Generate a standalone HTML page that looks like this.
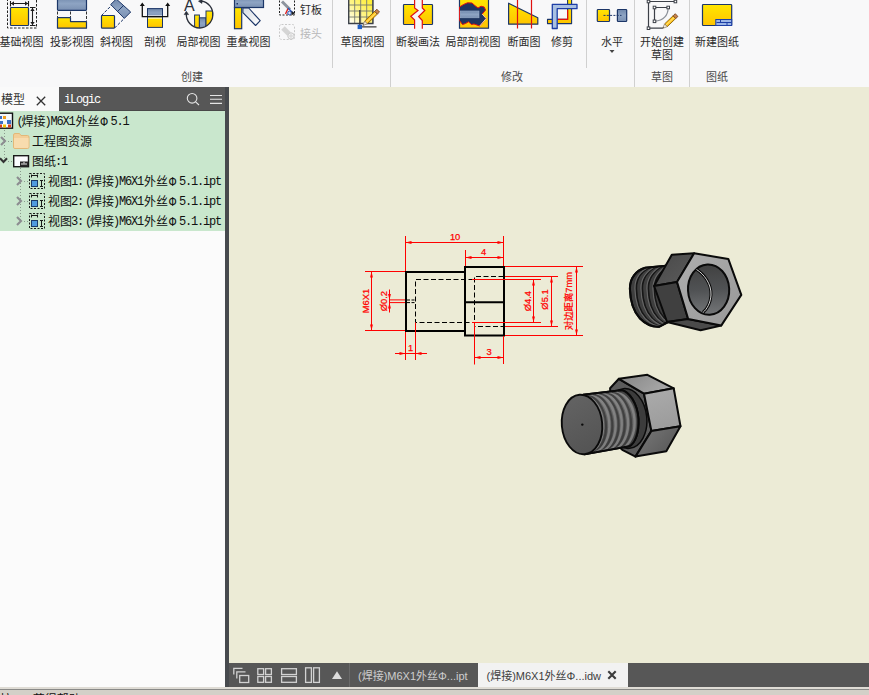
<!DOCTYPE html>
<html lang="zh-CN">
<head>
<meta charset="utf-8">
<title>Autodesk Inventor</title>
<style>
html,body{margin:0;padding:0;}
body{width:869px;height:695px;overflow:hidden;position:relative;background:#f4f4f4;font-family:"Liberation Sans","Noto Sans CJK SC",sans-serif;}
.abs{position:absolute;}
#ribbon{position:absolute;left:0;top:0;width:869px;height:87px;background:#f8f8f9;overflow:hidden;}
.rl{position:absolute;font-size:11px;line-height:13px;color:#2b2b2b;white-space:nowrap;text-align:center;transform:translateX(-50%);}
.pl{position:absolute;font-size:11px;line-height:13px;color:#4a4a4a;white-space:nowrap;text-align:center;transform:translateX(-50%);top:71px;}
.sep{position:absolute;width:1px;background:#d0d0d0;top:0;}
#canvas{position:absolute;left:229px;top:87px;width:640px;height:576px;background:#ecebd6;overflow:hidden;}
#lefttabs{position:absolute;z-index:2;left:0;top:87px;width:229px;height:24px;background:#575757;box-shadow:inset 0 -1px 0 #484848;}
#tabmodel{position:absolute;left:0;top:0;width:59px;height:24px;background:#fafafa;}
#tree{position:absolute;left:0;top:110px;width:225px;height:121px;background:#c9e7cd;overflow:hidden;}
#treewhite{position:absolute;left:0;top:231px;width:225px;height:456px;background:#fbfbfb;}
#vstrip{position:absolute;left:225px;top:87px;width:4px;height:600px;background:#474a4e;}
.tr{position:absolute;left:0;height:20px;line-height:20px;font-size:12px;color:#111;white-space:nowrap;font-family:"Liberation Mono","Noto Sans CJK SC",monospace;}
.tr .l{letter-spacing:-1.2px;position:relative;top:-1px;left:-1px;}
.tr .lp{left:1px;}
.tr .ph{display:inline-block;width:12px;text-align:center;position:relative;left:-1.5px;}
#bottabs{position:absolute;left:229px;top:663px;width:640px;height:24px;background:#575757;}
#status{position:absolute;left:0;top:687px;width:869px;height:8px;background:#d4d0c8;border-top:2px solid #dfdcd5;box-sizing:border-box;overflow:hidden;}
#status:before{content:"";position:absolute;left:0;top:0;width:869px;height:1px;background:#8a8a88;}
</style>
</head>
<body>
<div id="ribbon">
  <!-- RIBBON-ICONS -->
<svg class="abs" style="left:0;top:0;" width="869" height="60" viewBox="0 0 869 60">
<defs>
  <linearGradient id="gy" x1="0" y1="0" x2="0" y2="1"><stop offset="0" stop-color="#ffe600"/><stop offset="1" stop-color="#ffc400"/></linearGradient>
  <linearGradient id="gb" x1="0" y1="0" x2="0" y2="1"><stop offset="0" stop-color="#6f87ab"/><stop offset="0.5" stop-color="#8ea4c3"/><stop offset="1" stop-color="#7a90b2"/></linearGradient>
  <linearGradient id="gyw" x1="1" y1="0" x2="0" y2="1"><stop offset="0" stop-color="#ffee20"/><stop offset="0.55" stop-color="#fff58a"/><stop offset="1" stop-color="#ffffff"/></linearGradient>
  <linearGradient id="gw" x1="0" y1="0" x2="1" y2="1"><stop offset="0" stop-color="#d4dae2"/><stop offset="1" stop-color="#ffffff"/></linearGradient>
  <linearGradient id="gpen" x1="0" y1="0" x2="1" y2="1"><stop offset="0" stop-color="#ffd84a"/><stop offset="0.5" stop-color="#ffb300"/><stop offset="1" stop-color="#d98a00"/></linearGradient>
</defs>
<g>
<rect x="7.500" y="-3" width="29" height="31" fill="none" stroke="#222" stroke-width="1" stroke-dasharray="2.500 1.500"/>
<rect x="10.500" y="7.500" width="18" height="18" rx="0.800" fill="url(#gy)" stroke="#1c3668" stroke-width="1.200"/>
<path d="M10.500 3.500 H28.500 M10.500 1 V6.500 M28.500 1 V6.500 M32.500 7.500 V25.500 M30 7.500 H35.500 M30 25.500 H35.500" fill="none" stroke="#1e1e1e" stroke-width="1.100"/>
<path d="M11 3.500 L14 1.300 V5.700 Z M28 3.500 L25 1.300 V5.700 Z M32.500 8 L30.300 11 H34.700 Z M32.500 25 L30.300 22 H34.700 Z" fill="#1e1e1e"/>
</g>
<g>
<rect x="57.500" y="-3" width="29" height="13.300" rx="0.800" fill="url(#gb)" stroke="#1c3668" stroke-width="1.200"/>
<path d="M57.500 11.500 V17 M70.500 11.500 V17 M86.500 11.500 V21" fill="none" stroke="#333" stroke-width="1" stroke-dasharray="3 1.500"/>
<path d="M57.500 17.700 H70.500 V21.600 H86.500 V28.200 H57.500 Z" fill="url(#gy)" stroke="#1c3668" stroke-width="1.200" stroke-linejoin="round"/>
</g>
<g>
<path d="M101.500 15.500 L111.700 5.200 M114.600 28 L124.300 18.400" stroke="#1c3668" stroke-width="1" stroke-dasharray="3 1.500" fill="none"/>
<path d="M116.300 -1 L130.700 12 L124.300 18.400 L110.700 4.500 Z" fill="url(#gb)" stroke="#1c3668" stroke-width="1"/>
<path d="M123.500 5.500 L117.500 11.500" stroke="#1c3668" stroke-width="1"/>
<rect x="101.500" y="15.500" width="13" height="12.700" rx="0.800" fill="url(#gy)" stroke="#1c3668" stroke-width="1.200"/>
</g>
<g>
<rect x="147.500" y="8.600" width="15" height="8.500" fill="url(#gb)" stroke="#1c3668" stroke-width="1"/>
<rect x="147.500" y="17" width="15" height="10.400" fill="url(#gy)" stroke="#1c3668" stroke-width="1"/>
<rect x="148" y="15" width="14" height="4" fill="#fff" opacity="0.550"/>
<path d="M142.300 4 V16.600 H167.700 V4" fill="none" stroke="#111" stroke-width="1.300"/>
<path d="M142.300 2.600 L139.800 6 H144.800 Z M167.700 2.600 L165.200 6 H170.200 Z" fill="#111"/>
</g>
<g>
<clipPath id="cpd"><circle cx="199.800" cy="14.400" r="13.300"/></clipPath>
<g clip-path="url(#cpd)">
<rect x="194.600" y="15" width="4.800" height="14" fill="url(#gy)" stroke="#1c3668" stroke-width="1"/>
<rect x="199.400" y="17.800" width="6.600" height="11" fill="url(#gb)" stroke="#1c3668" stroke-width="1"/>
<rect x="206" y="11" width="6.500" height="16" fill="url(#gy)" stroke="#1c3668" stroke-width="1"/>
</g>
<path d="M201.500 1 A13.600 13.600 0 0 1 199.800 28 A13.600 13.600 0 0 1 186.400 13" fill="none" stroke="#2a2f3a" stroke-width="1.300"/>
<path d="M198.500 1.200 L202 -0.800 V3.400 Z M186.300 11.300 L184.200 14.600 H188.600 Z" fill="#2a2f3a" stroke="#2a2f3a" stroke-width="0.600"/>
<text x="189.400" y="10.600" font-family="Liberation Sans, sans-serif" font-size="16px" text-anchor="middle" fill="#2a2f3a">A</text>
</g>
<g>
<path d="M242.900 8 L248.700 8 L260.200 20.700 L255.600 25.500 L242.900 12.700 Z" fill="url(#gw)" stroke="#1c3668" stroke-width="1.100" stroke-linejoin="round"/>
<rect x="234.500" y="7.500" width="7.200" height="21.200" fill="url(#gy)" stroke="#1c3668" stroke-width="1.200"/>
<rect x="234.500" y="-3" width="29" height="10.500" fill="url(#gb)" stroke="#1c3668" stroke-width="1.200"/>
<rect x="236.500" y="3" width="1.500" height="1.500" fill="#1c3668"/>
</g>
<g>
<rect x="279.500" y="-2" width="15" height="17" fill="none" stroke="#222" stroke-width="1" stroke-dasharray="2 1.500"/>
<path d="M282 1.500 L290 9.500" stroke="#8d949e" stroke-width="3"/>
<path d="M288 8.500 L285.500 14" stroke="#e0201c" stroke-width="1.400"/>
<path d="M288 8 L293.500 13.500" stroke="#2a55b8" stroke-width="1.200"/>
<circle cx="289.500" cy="13" r="1.800" fill="#dbe6f6" stroke="#2a55b8" stroke-width="1"/>
<path d="M291.500 11 L295 13.300 L291.500 15.500 Z" fill="#222"/>
</g>
<g opacity="0.900">
<rect x="279.500" y="24.500" width="15" height="15" rx="2" fill="none" stroke="#c4c4c4" stroke-width="1" stroke-dasharray="2 1.500"/>
<path d="M283 28 L289 34" stroke="#d2d2d2" stroke-width="5" stroke-linecap="butt"/>
<circle cx="291" cy="36" r="3.200" fill="#f2f2f2" stroke="#c4c4c4" stroke-width="1"/>
<circle cx="291" cy="36" r="1.200" fill="none" stroke="#c4c4c4" stroke-width="0.800"/>
</g>
<g>
<rect x="348.700" y="-2" width="24.200" height="25.500" fill="url(#gyw)"/>
<path d="M348.700 0 V23.500 M354.700 0 V23.500 M360.700 0 V23.500 M366.700 0 V23.500 M372.900 0 V23.500 M348.700 5 H372.900 M348.700 11 H372.900 M348.700 17 H372.900 M348.700 23.500 H372.900" fill="none" stroke="#777a70" stroke-width="0.900"/>
<path d="M348.700 -2 V23.500 H372.900 V-2" fill="none" stroke="#3a3f48" stroke-width="1.300"/>
<path d="M359.800 10 V25 M362 26.800 H376.500" stroke="#3a3a3a" stroke-width="1.300"/>
<rect x="357.600" y="24.700" width="4.400" height="4.400" fill="#1f5fc4"/>
<path d="M367.3 23.8 L377.4 14.1 L374.7 11.3 L364.7 21.1 Z" fill="#ffc21a" stroke="#7a5200" stroke-width="0.800" stroke-linejoin="round"/><path d="M366.0 22.5 L376.1 12.7" stroke="#ffe98a" stroke-width="1"/><path d="M377.4 14.1 L379.5 12.0 L376.9 9.2 L374.7 11.3 Z" fill="#c9824a" stroke="#6e3f18" stroke-width="0.800" stroke-linejoin="round"/><path d="M367.3 23.8 L362.8 25.6 L364.7 21.1 Z" fill="#f6ecd9" stroke="#8a7a60" stroke-width="0.700" stroke-linejoin="round"/><path d="M364.4 25.0 L362.8 25.6 L363.5 24.0 Z" fill="#555"/>
</g>
<g>
<rect x="403.500" y="4.500" width="29" height="20" rx="0.800" fill="url(#gy)" stroke="#1c3668" stroke-width="1.200"/>
<path d="M414.600 -1 V8 L418 10.500 L410.800 16.200 L414.600 20 V29 H422.300 V20.500 L418.600 16.500 L424.800 10.500 L422.300 8 V-1 Z" fill="#f7f7f7"/>
<path d="M414.600 -1 V8 L418 10.500 L410.800 16.200 L414.600 20 V28.800 M422.300 -1 V8 L424.800 10.500 L418.600 16.500 L422.300 20.500 V28.800" fill="none" stroke="#e01010" stroke-width="1.200"/>
</g>
<g>
<rect x="459.500" y="-2" width="29" height="30.200" fill="url(#gy)" stroke="#1c3668" stroke-width="1.200"/>
<path d="M459.500 7 L463.500 4.500 L467.500 2.800 L472 3 L474.800 5.500 L478 8 L481 6.200 L484.200 7 L485.600 10 L482.200 14 L486.200 18.500 L479.800 26 L474 24 L471.500 24.500 L468.500 21.800 L465.500 23.500 L462.500 24.500 L459.500 20.500 Z" fill="#1f3560" stroke="#e01010" stroke-width="1"/>
<path d="M479.800 26 L486.200 18.500 L482.200 14" fill="none" stroke="#f5ecb0" stroke-width="0.900"/>
<rect x="460.200" y="11" width="18.800" height="6.800" fill="url(#gb)" stroke="#9fb2cd" stroke-width="0.600"/>
</g>
<g>
<path d="M508.600 3.200 L537.800 17.800 V24.200 H508.600 Z" fill="url(#gy)" stroke="#1c3668" stroke-width="1.200" stroke-linejoin="round"/>
<path d="M517.500 -1 V28.500 M531.500 -1 V28.500" stroke="#e01010" stroke-width="1.200"/>
</g>
<g>
<path d="M567.600 -2 H571.600 V23.600 H547.500 V19.400 H567.600 Z" fill="url(#gy)" stroke="#1c3668" stroke-width="1.100" stroke-linejoin="round"/>
<path d="M567.600 10 V19.400 H557.500" fill="none" stroke="#e01010" stroke-width="1.200"/>
<path d="M552.300 4.400 H577 V8.700 H557.200 V28.500 H552.300 Z" fill="#a9c0e2" stroke="#1d3ea6" stroke-width="1.300" stroke-linejoin="round"/>
</g>
<g>
<rect x="597.300" y="9.500" width="12.200" height="12" rx="0.800" fill="url(#gy)" stroke="#1c3668" stroke-width="1.200"/>
<rect x="617.400" y="9.500" width="9.300" height="12" rx="0.800" fill="url(#gb)" stroke="#1c3668" stroke-width="1.200"/>
<path d="M603.500 15.400 H621.500" stroke="#1c3668" stroke-width="1" stroke-dasharray="2 1.300"/>
<path d="M609.500 50 H614.500 L612 53 Z" fill="#444"/>
</g>
<g>
<path d="M675.400 1.500 H648.500 V28.200 H663" fill="none" stroke="#3c4048" stroke-width="1.200"/>
<path d="M668.200 7.500 H654.500 V21.300" fill="none" stroke="#3c4048" stroke-width="1.200"/>
<path d="M668.200 7.500 Q668 20 654.500 21.300" fill="none" stroke="#8b9098" stroke-width="1.200"/>
<g fill="#fff" stroke="#3c4048" stroke-width="1">
<rect x="647.200" y="0.200" width="2.600" height="2.600"/><rect x="674.100" y="0.200" width="2.600" height="2.600"/><rect x="647.200" y="26.900" width="2.600" height="2.600"/>
<rect x="653.200" y="6.200" width="2.600" height="2.600"/><rect x="666.900" y="6.200" width="2.600" height="2.600"/><rect x="653.200" y="20" width="2.600" height="2.600"/>
</g>
<path d="M667.2 26.7 L675.7 18.5 L673.1 15.8 L664.6 23.9 Z" fill="#ffc21a" stroke="#7a5200" stroke-width="0.800" stroke-linejoin="round"/><path d="M665.9 25.3 L674.4 17.2" stroke="#ffe98a" stroke-width="1"/><path d="M675.7 18.5 L677.9 16.5 L675.3 13.7 L673.1 15.8 Z" fill="#c9824a" stroke="#6e3f18" stroke-width="0.800" stroke-linejoin="round"/><path d="M667.2 26.7 L662.6 28.4 L664.6 23.9 Z" fill="#f6ecd9" stroke="#8a7a60" stroke-width="0.700" stroke-linejoin="round"/><path d="M664.2 27.8 L662.6 28.4 L663.3 26.8 Z" fill="#555"/>
</g>
<g>
<rect x="702.500" y="4.500" width="29.200" height="21" rx="0.800" fill="url(#gy)" stroke="#1c3668" stroke-width="1.200"/>
<rect x="715.800" y="19.500" width="15.900" height="6" fill="#9bb5e6" stroke="#1d3ea6" stroke-width="1"/>
<path d="M716.500 22.500 H731.500 M720.500 20 V22.500 M727 22.500 V25" stroke="#1d3ea6" stroke-width="1"/>
</g>
</svg>
  <!-- /RIBBON-ICONS -->
  <div class="rl" style="left:21.5px;top:36px;">基础视图</div>
  <div class="rl" style="left:72px;top:36px;">投影视图</div>
  <div class="rl" style="left:116.5px;top:36px;">斜视图</div>
  <div class="rl" style="left:155px;top:36px;">剖视</div>
  <div class="rl" style="left:198.5px;top:36px;">局部视图</div>
  <div class="rl" style="left:248.5px;top:36px;">重叠视图</div>
  <div class="rl" style="left:311px;top:4px;">钉板</div>
  <div class="rl" style="left:311px;top:28px;color:#b9b9b9;">接头</div>
  <div class="rl" style="left:362.5px;top:36px;">草图视图</div>
  <div class="rl" style="left:418px;top:36px;">断裂画法</div>
  <div class="rl" style="left:473px;top:36px;">局部剖视图</div>
  <div class="rl" style="left:524px;top:36px;">断面图</div>
  <div class="rl" style="left:562px;top:36px;">修剪</div>
  <div class="rl" style="left:612px;top:36px;">水平</div>
  <div class="rl" style="left:662px;top:36px;">开始创建<br>草图</div>
  <div class="rl" style="left:717px;top:36px;">新建图纸</div>
  <div class="pl" style="left:192px;">创建</div>
  <div class="pl" style="left:512px;">修改</div>
  <div class="pl" style="left:662px;">草图</div>
  <div class="pl" style="left:717px;">图纸</div>
  <div class="sep" style="left:332px;height:68px;"></div>
  <div class="sep" style="left:390px;height:87px;"></div>
  <div class="sep" style="left:586px;height:68px;"></div>
  <div class="sep" style="left:634px;height:87px;"></div>
  <div class="sep" style="left:689px;height:87px;"></div>
</div>

<div id="lefttabs">
  <div id="tabmodel"></div>
  <div class="abs" style="left:225px;top:0;width:4px;height:24px;background:#474a4e;"></div>
  <div class="abs" style="left:1px;top:5px;font-size:12px;line-height:16px;color:#333;">模型</div>
  <svg class="abs" style="left:34px;top:7px;" width="14" height="14" viewBox="0 0 14 14"><path d="M2.800 2.800 L11.200 11.200 M11.200 2.800 L2.800 11.200" stroke="#333" stroke-width="1.300" fill="none"/></svg>
  <div class="abs" style="left:64px;top:5px;font-size:12px;line-height:16px;color:#ffffff;font-family:'Liberation Mono',monospace;letter-spacing:-1.200px;">iLogic</div>
  <svg class="abs" style="left:184px;top:4px;" width="42" height="18" viewBox="0 0 42 18"><circle cx="8.1" cy="7.3" r="4.8" fill="none" stroke="#e4e4e4" stroke-width="1.1"/><path d="M11.6 10.8 L15 14" stroke="#e4e4e4" stroke-width="1.1"/><path d="M26 4.5 H38 M26 8.3 H38 M26 12.4 H38" stroke="#e4e4e4" stroke-width="1.1"/></svg>
</div>
<div id="tree">

  <svg class="abs" style="left:0;top:0;" width="60" height="121" viewBox="0 0 60 121">
    <!-- dotted connector lines -->
    <path d="M4.5 20 V48 M20.5 58 V112" stroke="#8a9a8c" stroke-width="1" stroke-dasharray="1 2" fill="none"/>
    <path d="M8 31.5 H13 M8 51.5 H13 M24 71.5 H29 M24 91.5 H29 M24 111.5 H29" stroke="#8a9a8c" stroke-width="1" stroke-dasharray="1 2" fill="none"/>
    <!-- root icon -->
    <g>
      <rect x="-3.500" y="3.200" width="16" height="15" fill="#f2f7fc" stroke="#111" stroke-width="1.400"/>
      <rect x="-1" y="6" width="3" height="3" fill="#3a6fc4"/><rect x="3" y="6" width="3" height="3" fill="#f0a020"/>
      <rect x="-1" y="11" width="4" height="3" fill="#3a6fc4"/><rect x="7" y="10" width="4" height="4" fill="#3a6fc4"/>
      <rect x="3" y="14.500" width="3" height="3" fill="#f2c200"/><rect x="8" y="14.500" width="3" height="3" fill="#d84020"/>
      <rect x="-1" y="14.500" width="3" height="3" fill="#d84020"/>
    </g>
    <!-- chevrons -->
    <path d="M1 27 L5 31 L1 35" stroke="#8c8c90" stroke-width="2.100" fill="none"/>
    <path d="M0 48.300 L3.500 52 L7 48.300" stroke="#333" stroke-width="2.100" fill="none"/>
    <path d="M17 67 L21 71 L17 75" stroke="#8c8c90" stroke-width="2.100" fill="none"/>
    <path d="M17 87 L21 91 L17 95" stroke="#8c8c90" stroke-width="2.100" fill="none"/>
    <path d="M17 107 L21 111 L17 115" stroke="#8c8c90" stroke-width="2.100" fill="none"/>
    <!-- folder -->
    <path d="M13.5 25 Q13.5 23.5 15 23.5 H19.5 L21 25.5 H27.5 Q29 25.5 29 27 V37 Q29 38.5 27.5 38.5 H15 Q13.5 38.5 13.5 37 Z" fill="#f3cf98" stroke="#e3b878" stroke-width="1"/>
    <path d="M14 28 H28.5 V37 Q28.500 38 27.5 38 H15 Q14 38 14 37 Z" fill="#f8dcae"/>
    <!-- sheet icon -->
    <rect x="13.700" y="45.700" width="14.800" height="11" fill="#fbfcfe" stroke="#1a1a1a" stroke-width="1.400"/>
    <rect x="20" y="51.500" width="8" height="5" fill="#2a2a2a"/>
    <path d="M21 54 H27 M24 52 V53.500" stroke="#e8e8e8" stroke-width="1"/>
    <!-- view icons -->
    <g>
      <rect x="29.500" y="63.500" width="15" height="15" fill="none" stroke="#1a1a1a" stroke-width="1" stroke-dasharray="2 1.500"/>
      <rect x="31.500" y="70.500" width="6" height="6" fill="#4f9be0" stroke="#1b3a6b" stroke-width="1"/>
      <path d="M31.500 65.500 H37.500 M31.500 64.500 V67.500 M37.500 64.500 V67.500 M40 70.500 H43 M40 76.500 H43 M41.500 70.500 V76.500" stroke="#1a1a1a" stroke-width="1" fill="none"/>
    </g>
    <g>
      <rect x="29.500" y="83.5" width="15" height="15" fill="none" stroke="#1a1a1a" stroke-width="1" stroke-dasharray="2 1.500"/>
      <rect x="31.500" y="90.5" width="6" height="6" fill="#4f9be0" stroke="#1b3a6b" stroke-width="1"/>
      <path d="M31.5 85.5 H37.5 M31.5 84.5 V87.5 M37.5 84.5 V87.5 M40 90.5 H43 M40 96.5 H43 M41.5 90.5 V96.5" stroke="#1a1a1a" stroke-width="1" fill="none"/>
    </g>
    <g>
      <rect x="29.500" y="103.5" width="15" height="15" fill="none" stroke="#1a1a1a" stroke-width="1" stroke-dasharray="2 1.500"/>
      <rect x="31.500" y="110.5" width="6" height="6" fill="#4f9be0" stroke="#1b3a6b" stroke-width="1"/>
      <path d="M31.5 105.5 H37.5 M31.5 104.5 V107.5 M37.5 104.5 V107.5 M40 110.5 H43 M40 116.5 H43 M41.5 110.5 V116.5" stroke="#1a1a1a" stroke-width="1" fill="none"/>
    </g>
  </svg>
  <div class="tr" style="left:15.500px;top:3px;"><span class="l lp">(</span>焊接<span class="l">)M6X1</span>外丝<span class="ph">Φ</span><span class="l">5.1</span></div>
  <div class="tr" style="left:32px;top:23px;">工程图资源</div>
  <div class="tr" style="left:32px;top:43px;">图纸<span class="l">:1</span></div>
  <div class="tr" style="left:48px;top:63px;">视图<span class="l">1:</span><span class="l lp">(</span>焊接<span class="l">)M6X1</span>外丝<span class="ph">Φ</span><span class="l">5.1.ipt</span></div>
  <div class="tr" style="left:48px;top:83px;">视图<span class="l">2:</span><span class="l lp">(</span>焊接<span class="l">)M6X1</span>外丝<span class="ph">Φ</span><span class="l">5.1.ipt</span></div>
  <div class="tr" style="left:48px;top:103px;">视图<span class="l">3:</span><span class="l lp">(</span>焊接<span class="l">)M6X1</span>外丝<span class="ph">Φ</span><span class="l">5.1.ipt</span></div>
</div>
<div id="treewhite"></div>
<div id="vstrip"></div>

<div id="canvas">
<svg class="abs" style="left:0;top:0;" width="640" height="575" viewBox="229 87 640 575">
  <!-- DRAWING2D -->
  <g fill="none" stroke="#000" stroke-width="2" stroke-linejoin="miter">
  <path d="M465 272 H406 V331 H465"/>
  <rect x="465" y="267" width="39" height="68.500"/>
  <path d="M465 302.300 H504"/>
  </g>
  <g fill="none" stroke="#000" stroke-width="1" stroke-dasharray="5 2.500">
  <path d="M503.500 279.500 H415.500 V322.500 H503.500"/>
  <path d="M503.500 276.500 H474.500 V326.500 H503.500"/>
  </g>
  <path d="M407 300 H415.500 M407 302.600 H415.500" stroke="#000" stroke-width="1" stroke-dasharray="3 1.500" fill="none"/>
  <g fill="none" stroke="#ff0000" stroke-width="1">
  <path d="M405.500 236 V271 M503.500 236 V266 M405.500 242.500 H503.500"/>
  <path d="M465.500 250 V266 M465.500 257.500 H503.500"/>
  <path d="M365 271.500 H405 M365 330.500 H405 M371.500 271.500 V330.500"/>
  <path d="M389.500 289.500 V312.500 M389.500 299.900 H405 M389.500 302.600 H405"/>
  <path d="M405.500 332 V360 M415.500 322.500 V360 M395 353.500 H427"/>
  <path d="M474.500 322 V364.500 M503.500 336 V364 M474.500 357.500 H503.500"/>
  <path d="M472 279.500 H541 M472 322.500 H541 M533.500 279.500 V322.500"/>
  <path d="M505 276.500 H558 M505 326.500 H558 M551.500 276.500 V326.500"/>
  <path d="M505 266.500 H583 M505 335.500 H583 M576.500 266.500 V335.500"/>
  </g>
  <path d="M405.5 242.5 L411.5 241.1 L411.5 243.9 Z" fill="#ff0000"/>
  <path d="M503.5 242.5 L497.5 241.1 L497.5 243.9 Z" fill="#ff0000"/>
  <path d="M465.5 257.5 L471.5 256.1 L471.5 258.9 Z" fill="#ff0000"/>
  <path d="M503.5 257.5 L497.5 256.1 L497.5 258.9 Z" fill="#ff0000"/>
  <path d="M371.5 271.5 L370.1 277.5 L372.9 277.5 Z" fill="#ff0000"/>
  <path d="M371.5 330.5 L370.1 324.5 L372.9 324.5 Z" fill="#ff0000"/>
  <path d="M389.5 299.9 L388.1 293.9 L390.9 293.9 Z" fill="#ff0000"/>
  <path d="M389.5 302.6 L388.1 308.6 L390.9 308.6 Z" fill="#ff0000"/>
  <path d="M405.5 353.5 L399.5 352.1 L399.5 354.9 Z" fill="#ff0000"/>
  <path d="M415.5 353.5 L421.5 352.1 L421.5 354.9 Z" fill="#ff0000"/>
  <path d="M474.5 357.5 L480.5 356.1 L480.5 358.9 Z" fill="#ff0000"/>
  <path d="M503.5 357.5 L497.5 356.1 L497.5 358.9 Z" fill="#ff0000"/>
  <path d="M533.5 279.5 L532.1 285.5 L534.9 285.5 Z" fill="#ff0000"/>
  <path d="M533.5 322.5 L532.1 316.5 L534.9 316.5 Z" fill="#ff0000"/>
  <path d="M551.5 276.5 L550.1 282.5 L552.9 282.5 Z" fill="#ff0000"/>
  <path d="M551.5 326.5 L550.1 320.5 L552.9 320.5 Z" fill="#ff0000"/>
  <path d="M576.5 266.5 L575.1 272.5 L577.9 272.5 Z" fill="#ff0000"/>
  <path d="M576.5 335.5 L575.1 329.5 L577.9 329.5 Z" fill="#ff0000"/>
  <g fill="#ff0000" stroke="#ff0000" stroke-width="0.25" font-size="9.400px" font-family="Liberation Sans, Noto Sans CJK SC, sans-serif" text-anchor="middle">
  <text x="455.100" y="240.400">10</text>
  <text x="483.700" y="254.500">4</text>
  <text x="410.600" y="350.800">1</text>
  <text x="489.200" y="355.200">3</text>
  <text transform="translate(369.100 301) rotate(-90)">M6X1</text>
  <text transform="translate(387.200 301.100) rotate(-90)">Ø0.2</text>
  <text transform="translate(530.700 301.200) rotate(-90)">Ø4.4</text>
  <text transform="translate(548 299.500) rotate(-90)">Ø5.1</text>
  <text transform="translate(571.800 301) rotate(-90)">对边距离7mm</text>
  </g>
  <!-- MODELS -->
  <defs>
  <linearGradient id="gFront1" x1="0" y1="0" x2="1" y2="1"><stop offset="0" stop-color="#aeaeae"/><stop offset="1" stop-color="#989898"/></linearGradient>
  <linearGradient id="gHole1" x1="0" y1="0" x2="0" y2="1"><stop offset="0" stop-color="#414141"/><stop offset="0.5" stop-color="#505254"/><stop offset="1" stop-color="#747678"/></linearGradient>
  <linearGradient id="gThr1" x1="0" y1="0" x2="0.25" y2="1"><stop offset="0" stop-color="#4c4c4c"/><stop offset="0.5" stop-color="#3a3a3a"/><stop offset="1" stop-color="#444"/></linearGradient>
  <linearGradient id="gTop1" x1="0" y1="0" x2="1" y2="1"><stop offset="0" stop-color="#484848"/><stop offset="1" stop-color="#5c5c5c"/></linearGradient>
  <linearGradient id="gDisc2" x1="0" y1="0" x2="0.3" y2="1"><stop offset="0" stop-color="#646464"/><stop offset="1" stop-color="#555555"/></linearGradient>
  <linearGradient id="gThr2" x1="0" y1="0" x2="0.12" y2="1"><stop offset="0" stop-color="#6e6e6e"/><stop offset="0.35" stop-color="#666"/><stop offset="1" stop-color="#4a4a4a"/></linearGradient>
  <linearGradient id="gTop2" x1="0" y1="0" x2="1" y2="0.4"><stop offset="0" stop-color="#858585"/><stop offset="1" stop-color="#a8a8a8"/></linearGradient>
  <linearGradient id="gRight2" x1="0" y1="0" x2="0.3" y2="1"><stop offset="0" stop-color="#acacac"/><stop offset="1" stop-color="#9c9c9c"/></linearGradient>
  <linearGradient id="gBot2" x1="0" y1="0" x2="1" y2="0.6"><stop offset="0" stop-color="#7c7c7c"/><stop offset="1" stop-color="#585858"/></linearGradient>
</defs>
  <g stroke="#0a0a0a" stroke-width="2" stroke-linejoin="round">
  <path d="M666 265.800 L645.300 267.700 C636 270.500 629.600 278 629.900 289 C630.200 300 633 311 640 318.500 C645 323.500 652 327.200 659.400 326.700 L668 322 Z" fill="#3e3e3e"/>
  </g>
  <clipPath id="cpThr1"><path d="M666 265.800 L645.300 267.700 C636 270.500 629.600 278 629.900 289 C630.200 300 633 311 640 318.500 C645 323.500 652 327.200 659.400 326.700 L668 322 Z"/></clipPath>
  <g fill="none" clip-path="url(#cpThr1)">
  <path d="M651.8 266.6 C642.5 270.5 636.1 278 636.4 289 C636.7 300 639.5 311 646.5 318.5 C651.5 323.5 658.5 327.2 665.9 326.7" stroke="#161616" stroke-width="1.600"/>
  <path d="M651.8 266.6 C642.5 270.5 636.1 278 636.4 289 C636.7 300 639.5 311 646.5 318.5 C651.5 323.5 658.5 327.2 665.9 326.7" stroke="#666" stroke-width="1.100" transform="translate(-1.500 0)"/>
  <path d="M657.8 265.9 C648.5 270.5 642.1 278 642.4 289 C642.7 300 645.5 311 652.5 318.5 C657.5 323.5 664.5 327.2 671.9 326.7" stroke="#161616" stroke-width="1.600"/>
  <path d="M657.8 265.9 C648.5 270.5 642.1 278 642.4 289 C642.7 300 645.5 311 652.5 318.5 C657.5 323.5 664.5 327.2 671.9 326.7" stroke="#666" stroke-width="1.100" transform="translate(-1.500 0)"/>
  <path d="M663.8 265.3 C654.5 270.5 648.1 278 648.4 289 C648.7 300 651.5 311 658.5 318.5 C663.5 323.5 670.5 327.2 677.9 326.7" stroke="#161616" stroke-width="1.600"/>
  <path d="M663.8 265.3 C654.5 270.5 648.1 278 648.4 289 C648.7 300 651.5 311 658.5 318.5 C663.5 323.5 670.5 327.2 677.9 326.7" stroke="#666" stroke-width="1.100" transform="translate(-1.500 0)"/>
  <path d="M669.8 264.8 C660.5 270.5 654.1 278 654.4 289 C654.7 300 657.5 311 664.5 318.5 C669.5 323.5 676.5 327.2 683.9 326.7" stroke="#161616" stroke-width="1.600"/>
  <path d="M669.8 264.8 C660.5 270.5 654.1 278 654.4 289 C654.7 300 657.5 311 664.5 318.5 C669.5 323.5 676.5 327.2 683.9 326.7" stroke="#666" stroke-width="1.100" transform="translate(-1.500 0)"/>
  </g>
  <path d="M666 265.800 L645.300 267.700 C636 270.500 629.600 278 629.900 289 C630.200 300 633 311 640 318.500 C645 323.500 652 327.200 659.400 326.700 L668 322 Z" fill="none" stroke="#0a0a0a" stroke-width="2" stroke-linejoin="round"/>
  <g stroke="#0a0a0a" stroke-width="2" stroke-linejoin="round">
  <path d="M671.800 254.700 L694.100 253.300 L677 281.900 L654.100 286 Z" fill="url(#gTop1)"/>
  <path d="M654.100 286 L677 281.900 L688.200 319.100 L667.100 322 Z" fill="#404040"/>
  <path d="M667.100 322 L688.200 319.100 L721.200 325.600 L700.600 330.300 Z" fill="#4a4a4a"/>
  <path d="M694.100 253.300 L728.300 258.900 L741.300 294.900 L721.200 325.600 L688.200 319.100 L677 281.900 Z" fill="url(#gFront1)"/>
  <ellipse cx="708.600" cy="289.600" rx="20.600" ry="25.200" transform="rotate(-3 708.600 289.600)" fill="url(#gHole1)"/>
  </g>
  <path d="M696.500 269.500 C704 274 711.500 284 711 295 C710.500 303 707 309 703 312.500" fill="none" stroke="#0a0a0a" stroke-width="3"/>
  <path d="M696.500 269.500 C704 274 711.500 284 711 295 C710.500 303 707 309 703 312.500" fill="none" stroke="#e8e8e8" stroke-width="0.900"/>
  <g stroke="#0a0a0a" stroke-width="2" stroke-linejoin="round">
  <path d="M618.900 378.800 L610.100 388.300 L612 440 L622.300 449.900 L635.500 456.600 L651.400 430.900 L644 393.700 Z" fill="#5c5c5c"/>
  <path d="M618.900 378.800 L647.400 374.800 L673.700 388.300 L644 393.700 Z" fill="url(#gTop2)"/>
  <path d="M644 393.700 L673.700 388.300 L680.500 426.200 L651.400 430.900 Z" fill="url(#gRight2)"/>
  <path d="M651.400 430.900 L680.500 426.200 L666.300 451.200 L635.500 456.600 Z" fill="url(#gBot2)"/>
  </g>
  <clipPath id="cpNear"><path d="M618.900 378.800 L610.100 388.300 L612 440 L622.300 449.900 L635.500 456.600 L651.400 430.900 L644 393.700 Z"/></clipPath>
  <g clip-path="url(#cpNear)"><ellipse cx="626.500" cy="418.500" rx="20.300" ry="30" transform="rotate(-6 626.500 418.500)" fill="#3c3c3c" stroke="#0a0a0a" stroke-width="1.500"/></g>
  <clipPath id="cpThr"><path id="thrBody" d="M583 394.800 L621 390.200 C629.500 391 637.500 404 638.500 419 C639 432 635.500 443.500 629 446.300 L584.500 454.300 Z"/></clipPath>
  <path d="M583 394.800 L621 390.200 C629.500 391 637.500 404 638.500 419 C639 432 635.500 443.500 629 446.300 L584.500 454.300 Z" fill="url(#gThr2)" stroke="#0a0a0a" stroke-width="2" stroke-linejoin="round"/>
  <g clip-path="url(#cpThr)" fill="none">
  <path d="M583.6 394.8 A20.2 29.8 -5 0 1 588.8 453.3" stroke="#8a8a8a" stroke-width="2.400" opacity="0.800"/>
  <path d="M586.6 394.8 A20.2 29.8 -5 0 1 591.8 453.3" stroke="#383838" stroke-width="2" opacity="0.800"/>
  <path d="M589.9 394.0 A20.2 29.8 -5 0 1 595.1 452.5" stroke="#8a8a8a" stroke-width="2.400" opacity="0.800"/>
  <path d="M592.9 394.0 A20.2 29.8 -5 0 1 598.1 452.5" stroke="#383838" stroke-width="2" opacity="0.800"/>
  <path d="M596.2 393.2 A20.2 29.8 -5 0 1 601.4 451.7" stroke="#8a8a8a" stroke-width="2.400" opacity="0.800"/>
  <path d="M599.2 393.2 A20.2 29.8 -5 0 1 604.4 451.7" stroke="#383838" stroke-width="2" opacity="0.800"/>
  <path d="M602.5 392.5 A20.2 29.8 -5 0 1 607.7 450.9" stroke="#8a8a8a" stroke-width="2.400" opacity="0.800"/>
  <path d="M605.5 392.5 A20.2 29.8 -5 0 1 610.7 450.9" stroke="#383838" stroke-width="2" opacity="0.800"/>
  <path d="M608.8 391.7 A20.2 29.8 -5 0 1 614.0 450.1" stroke="#8a8a8a" stroke-width="2.400" opacity="0.800"/>
  <path d="M611.8 391.7 A20.2 29.8 -5 0 1 617.0 450.1" stroke="#383838" stroke-width="2" opacity="0.800"/>
  <path d="M615.1 390.9 A20.2 29.8 -5 0 1 620.3 449.4" stroke="#8a8a8a" stroke-width="2.400" opacity="0.800"/>
  <path d="M618.1 390.9 A20.2 29.8 -5 0 1 623.3 449.4" stroke="#383838" stroke-width="2" opacity="0.800"/>
  <path d="M621.4 390.1 A20.2 29.8 -5 0 1 626.6 448.6" stroke="#8a8a8a" stroke-width="2.400" opacity="0.800"/>
  <path d="M624.4 390.1 A20.2 29.8 -5 0 1 629.6 448.6" stroke="#383838" stroke-width="2" opacity="0.800"/>
  </g>
  <path d="M583 394.800 L621 390.200 C629.500 391 637.500 404 638.500 419 C639 432 635.500 443.500 629 446.300 L584.500 454.300" fill="none" stroke="#0a0a0a" stroke-width="2" stroke-linejoin="round"/>
  <ellipse cx="582" cy="424.500" rx="20.200" ry="29.800" transform="rotate(-5 582 424.500)" fill="url(#gDisc2)" stroke="#0a0a0a" stroke-width="1.900"/>
  <circle cx="582.300" cy="424.600" r="1.200" fill="#0a0a0a"/>
</svg>
</div>

<div id="bottabs">

  <svg class="abs" style="left:0;top:0;" width="125" height="24" viewBox="229 663 125 24">
    <g fill="none" stroke="#d2d2d2" stroke-width="1.300">
      <path d="M233.800 674.500 V668.300 H242.500 M236.800 678.500 V671.800 H245.500"/>
      <rect x="239.700" y="675.500" width="9" height="7"/>
      <rect x="257.800" y="668.700" width="5.800" height="5.800"/><rect x="265.600" y="668.700" width="5.800" height="5.800"/>
      <rect x="257.800" y="676.500" width="5.800" height="5.800"/><rect x="265.600" y="676.500" width="5.800" height="5.800"/>
      <rect x="281.600" y="668.700" width="14.800" height="5.800"/><rect x="281.600" y="676.500" width="14.800" height="5.800"/>
      <rect x="305.600" y="667.800" width="5.800" height="14.600"/><rect x="313.600" y="667.800" width="5.800" height="14.600"/>
    </g>
    <path d="M332 679 L337 671.300 L342 679 Z" fill="#dcdcdc"/>
    <path d="M349.500 663 V687" stroke="#6a6a6a" stroke-width="1"/>
  </svg>
  <div class="abs" style="left:129px;top:6px;font-size:11px;line-height:14px;color:#cecece;white-space:nowrap;">(焊接)M6X1外丝Φ...ipt</div>
  <div class="abs" style="left:249px;top:0px;width:150px;height:24px;background:#f2f2f2;"></div>
  <div class="abs" style="left:257.500px;top:6px;font-size:11px;line-height:14px;color:#3e3e3e;white-space:nowrap;">(焊接)M6X1外丝Φ...idw</div>
  <svg class="abs" style="left:377px;top:6px;" width="12" height="12" viewBox="0 0 12 12"><path d="M2.300 2.300 L9.700 9.700 M9.700 2.300 L2.300 9.700" stroke="#3c3c3c" stroke-width="2.100" fill="none"/></svg>
</div>
<div id="status"><div class="abs" style="left:0;top:4px;font-size:12px;line-height:14px;color:#111;white-space:nowrap;">按 F1 获得帮助</div></div>
</body>
</html>
